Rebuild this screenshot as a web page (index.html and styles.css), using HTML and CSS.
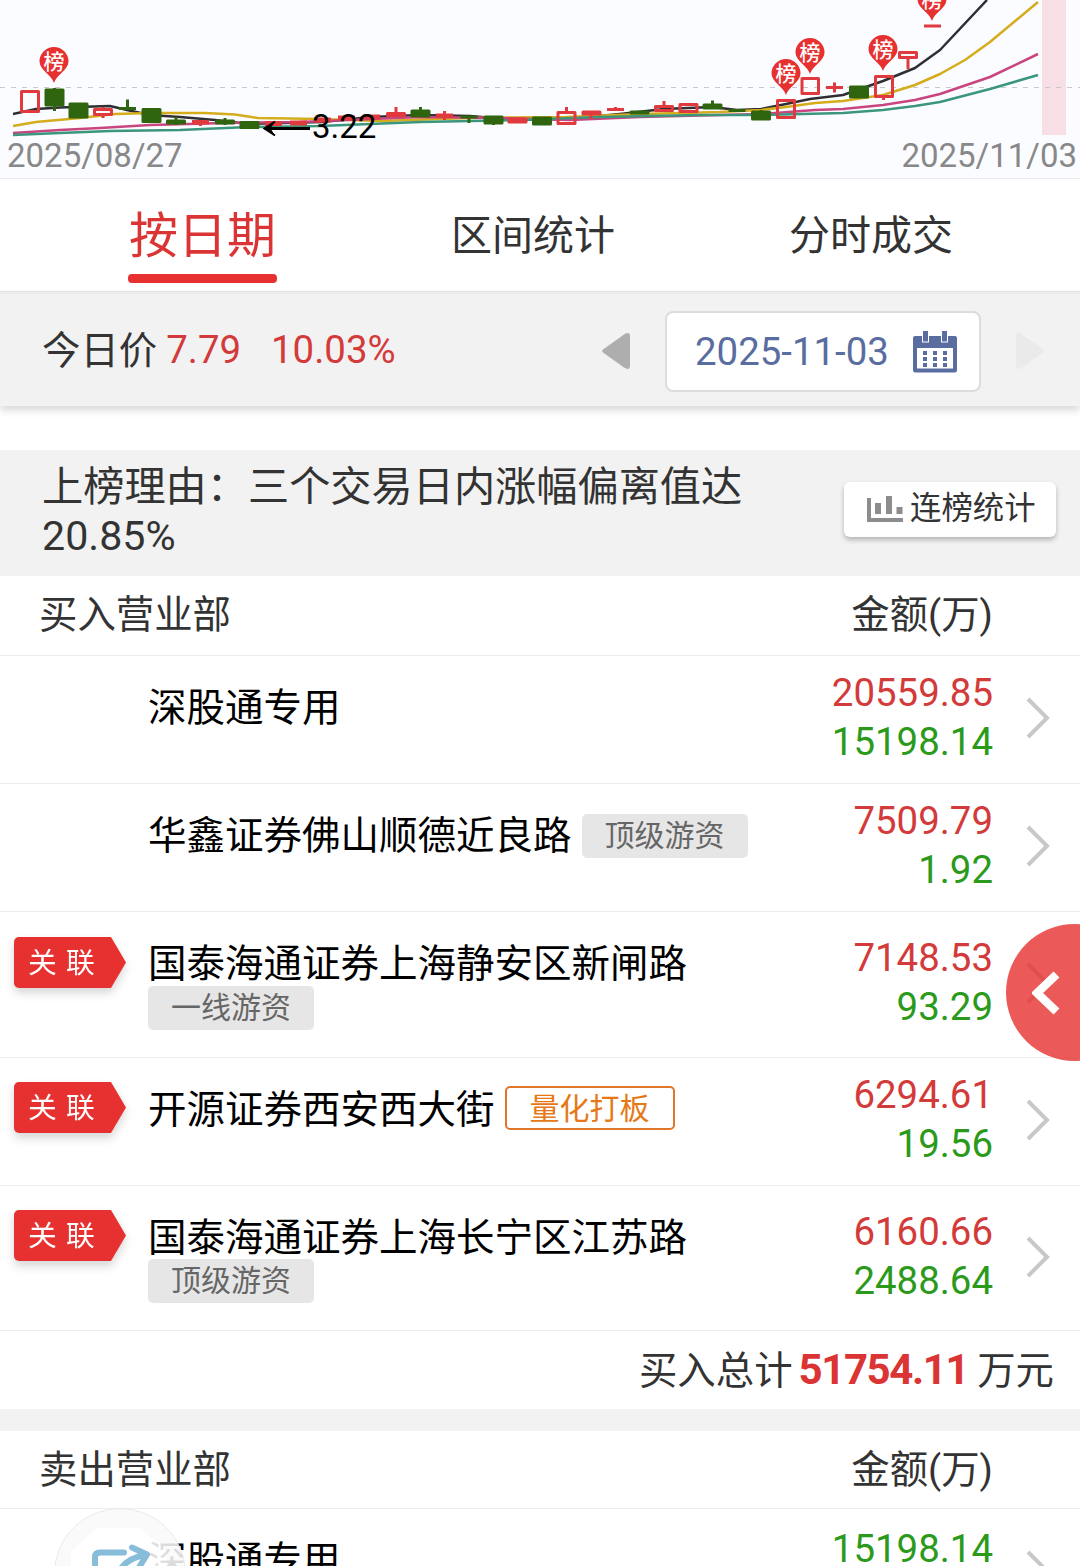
FILE: index.html
```html
<!DOCTYPE html>
<html lang="zh-CN">
<head>
    <meta charset="UTF-8">
    <meta name="viewport" content="width=device-width, initial-scale=1.0">
    <title>龙虎榜</title>
    <link rel="stylesheet" href="styles.css">
</head>
<body>
<div class="page">
    <!-- K线图 -->
    <div class="chart">
        <svg width="1080" height="178" viewBox="0 0 1080 178">
            <defs>
                <g id="pin">
                    <path d="M0 36C-2 28-14.500 23-14.500 14.500a14.500 14.500 0 1 1 29 0C14.500 23 2 28 0 36z" fill="#e73030"/>
                    <text x="0" y="21.500" class="pin-text">榜</text>
                </g>
            </defs>
            <rect x="1042" y="0" width="24" height="135" fill="#f7dfe5"/>
            <path class="grid" d="M0 87.500H1080"/>
            <g class="lines">
                <path stroke="#2f2f33" d="M13 114L36 109 60 107.500 110 106 127 110 150 115 180 117 215 120 249 124 322 122 371 117 420 115 470 116 517 120 566 119 620 114 664 109 712 107 737 110 761 109 786 104 810 99 843 95 883 81 915 68 940 50 987 0"/>
                <path stroke="#d4ac1c" d="M13 126L36 122 80 118 115 114 150 113 205 113 235 114.500 258 118 320 119 380 121 470 118 566 117 640 114 720 112 761 110 786 107 815 103 843 101 883 95 915 85 940 74 965 60 990 42 1038 2"/>
                <path stroke="#c9457f" d="M13 133L60 130 100 128 150 125 225 123 300 122 420 117 500 118 570 120 640 117 761 114 815 110 843 109 883 105 915 100 940 94 990 77 1038 54"/>
                <path stroke="#3c967c" d="M13 135L60 133 110 131 180 130 249 127 320 126 420 122 520 120 600 117 700 115 761 115 843 113 883 110 915 106 940 102 990 89 1038 75"/>
            </g>
            <g class="up">
                <path d="M21.500 91.500h17v20h-17zM94.500 109.500h17v5h-17zM103 107v3M103 115v3M192 121.500h17M192 123h17M200.500 122v4M265 122.500h17M265 124.500h17M290 122h17M290 124h17M314 119h17M314 121h17M338 117h17M338 119h17M363 116h17M363 118h17M387.500 113.500h17v2h-17zM396 107v6M436 115h17M436 116.500h17M444.500 111v9M509 119h17v3h-17zM558 112.500h17v11h-17zM566.500 107v5M583 112h17v2h-17zM591 114v5M607 109.500h17M615.500 107v3M655.500 106.500h17v4h-17zM664 101v5M680 104.500h17v7h-17zM777.500 100.500h17v17h-17zM802 78.500h16.500v15H802zM826 87.500h17M834.500 82.500v10M875.500 76.500h17v20h-17zM883.500 97v3M899.500 52.500h17v5h-17zM908 58v11M924 26h17"/>
            </g>
            <g class="down">
                <path d="M46 90h17v15H46zM54.500 88v23M70 104h17v13H70zM78.500 103v14M119 108.500h17M127.500 99.500v9M143 109.500h17v12h-17zM152 109v14M167.500 121h17v2h-17zM176 117v8M216.500 121h17v2h-17zM225 118v7M241 122.500h17v5h-17zM412 111h17v5h-17zM420.500 107v10M460.500 117h17M469 117v6M485 117h17v6h-17zM493.500 116v9M533.500 118h17v6h-17zM631 112h17v1h-17zM704 105h17v3h-17zM712.500 100.500v6M728.500 110.500h17M752.500 112h17v7h-17zM761 110v10M850.500 87h17v10h-17zM859 86v12"/>
            </g>
            <use href="#pin" x="54" y="47"/>
            <use href="#pin" x="786" y="59"/>
            <use href="#pin" x="810" y="38"/>
            <use href="#pin" x="883" y="35"/>
            <use href="#pin" x="932" y="-15"/>
            <path d="M270 128.500H310" stroke="#000" stroke-width="3"/>
            <path d="M263 128.500l12-7-4.500 7 4.500 7z" fill="#000"/>
            <path d="M275 121.500l-10.500 7 10.500 7" fill="none" stroke="#000" stroke-width="2"/>
            <text x="312" y="138" class="low-price">3.22</text>
        </svg>
        <div class="chart-dates">
            <span>2025/08/27</span>
            <span>2025/11/03</span>
        </div>
    </div>

    <!-- 切换标签 -->
    <div class="tabs">
        <div class="tab active">按日期</div>
        <div class="tab">区间统计</div>
        <div class="tab">分时成交</div>
    </div>

    <!-- 今日价格和日期选择 -->
    <div class="price-bar">
        <span class="price-label">今日价</span>
        <span class="price">7.79</span>
        <span class="price">10.03%</span>
        <svg class="prev" width="28" height="36" viewBox="0 0 28 36"><path d="M1 16.500L22 1.500Q28-2 28 3V33Q28 38 22 34.500L1 19.500Q-.5 18 1 16.500z" fill="#aeaeae"/></svg>
        <div class="date-box">
            <span>2025-11-03</span>
            <svg width="44" height="42" viewBox="0 0 44 42">
                <path fill="#596da0" fill-rule="evenodd" d="M2 5H42Q44 5 44 7V39Q44 41.500 41.500 41.500H2.500Q0 41.500 0 39V7Q0 5 2 5zM4 17V37.500H40V17z"/>
                <path d="M9 0h7v11.500H9zM28 0h7v11.500h-7z" fill="#fff"/>
                <path d="M10 0h5v10.500h-5zM29 0h5v10.500h-5zM10 20h4v4h-4zM20 20h4v4h-4zM30 20h4v4h-4zM10 26h4v4h-4zM20 26h4v4h-4zM30 26h4v4h-4zM10 32h4v4h-4zM20 32h4v4h-4zM30 32h4v4h-4z" fill="#596da0"/>
            </svg>
        </div>
        <svg class="next" width="28" height="36" viewBox="0 0 28 36"><path d="M27 16.500L6 1.500Q0-2 0 3V33Q0 38 6 34.500L27 19.500Q28.500 18 27 16.500z" fill="#eaeaea"/></svg>
    </div>

    <!-- 上榜理由 -->
    <div class="reason">
        <p>上榜理由：三个交易日内涨幅偏离值达20.85%</p>
        <div class="stat-btn">
            <svg width="36" height="26" viewBox="0 0 36 26"><path fill="#8c8c8c" d="M0 2h4v20h32v4H0zM8 7h6v11H8zM19 0h6v18h-6zM29.500 11h6v7h-6z"/></svg>
            <span>连榜统计</span>
        </div>
    </div>

    <!-- 买入 -->
    <div class="list-head">
        <span>买入营业部</span>
        <span>金额(万)</span>
    </div>
    <div class="row">
        <div class="mark"></div>
        <div class="dept"><span class="name">深股通专用</span></div>
        <div class="amount"><span class="buy">20559.85</span><span class="sell">15198.14</span></div>
        <svg class="arrow" viewBox="0 0 24 42"><path d="M2 2l19 19L2 40"/></svg>
    </div>
    <div class="row">
        <div class="mark"></div>
        <div class="dept"><span class="name">华鑫证券佛山顺德近良路</span><span class="tag">顶级游资</span></div>
        <div class="amount"><span class="buy">7509.79</span><span class="sell">1.92</span></div>
        <svg class="arrow" viewBox="0 0 24 42"><path d="M2 2l19 19L2 40"/></svg>
    </div>
    <div class="row tall">
        <div class="mark"><div class="link"><span>关 联</span></div></div>
        <div class="dept"><span class="name">国泰海通证券上海静安区新闸路</span><span class="tag">一线游资</span></div>
        <div class="amount"><span class="buy">7148.53</span><span class="sell">93.29</span></div>
        <svg class="arrow" viewBox="0 0 24 42"><path d="M2 2l19 19L2 40"/></svg>
    </div>
    <div class="row">
        <div class="mark"><div class="link"><span>关 联</span></div></div>
        <div class="dept"><span class="name">开源证券西安西大街</span><span class="tag quant">量化打板</span></div>
        <div class="amount"><span class="buy">6294.61</span><span class="sell">19.56</span></div>
        <svg class="arrow" viewBox="0 0 24 42"><path d="M2 2l19 19L2 40"/></svg>
    </div>
    <div class="row last">
        <div class="mark"><div class="link"><span>关 联</span></div></div>
        <div class="dept"><span class="name">国泰海通证券上海长宁区江苏路</span><span class="tag">顶级游资</span></div>
        <div class="amount"><span class="buy">6160.66</span><span class="sell">2488.64</span></div>
        <svg class="arrow" viewBox="0 0 24 42"><path d="M2 2l19 19L2 40"/></svg>
    </div>
    <div class="total">
        <span>买入总计</span>
        <b>51754.11</b>
        <span>万元</span>
    </div>

    <!-- 卖出 -->
    <div class="list-head sell-head">
        <span>卖出营业部</span>
        <span>金额(万)</span>
    </div>
    <div class="row sell-row">
        <div class="mark"></div>
        <div class="dept"><span class="name">深股通专用</span></div>
        <div class="amount"><span class="sell">15198.14</span></div>
        <svg class="arrow" viewBox="0 0 24 42"><path d="M2 2l19 19L2 40"/></svg>
    </div>

    <!-- 悬浮按钮 -->
    <div class="side-btn">
        <svg width="28" height="44" viewBox="0 0 28 44"><path d="M24.500 3.500L5 22l19.500 18.500" fill="none" stroke="#fff" stroke-width="8.500"/></svg>
    </div>
    <div class="share-btn">
        <svg width="132" height="132" viewBox="0 0 132 132">
            <path d="M42 19H86L112 42V92L86 114H42L16 92V42z" fill="#fff"/>
            <path d="M69 43.500H45Q40 43.500 40 48V85Q40 90 45 90H84Q89 90 89 85V76M60 72Q66 50 90 46M77 38.500L92 45.500 83 60" fill="none" stroke="#78b4d5" stroke-width="6" stroke-linecap="round" stroke-linejoin="round"/>
        </svg>
    </div>
</div>
</body>
</html>
```
FILE: styles.css
```css
* {
    box-sizing: border-box;
}
body {
    margin: 0;
    background-color: #fff;
    color: #333;
    font-family: Roboto, "Noto Sans CJK SC", sans-serif;
    font-size: 38.4px;
    font-weight: 400;
}
svg {
    display: block;
    flex-shrink: 0;
}
.page {
    position: relative;
    width: 1080px;
    height: 1566px;
    overflow: hidden;
}

/* K线图 */
.chart {
    position: relative;
    height: 179px;
    background-color: #fbfcff;
    border-bottom: 1px solid #e9e9ee;
}
.grid {
    stroke: #c8c8cc;
    stroke-dasharray: 5 6;
}
.lines path {
    fill: none;
    stroke-width: 2.5;
    stroke-linejoin: round;
}
.up path {
    fill: none;
    stroke: #e03a3e;
    stroke-width: 3;
    stroke-linejoin: round;
}
.down path {
    fill: #2f650f;
    stroke: #2f650f;
    stroke-width: 3;
    stroke-linejoin: round;
}
.pin-text {
    fill: #fff;
    font-size: 21px;
    font-weight: 500;
    text-anchor: middle;
}
.low-price {
    fill: #000;
    font-size: 33px;
}
.chart-dates {
    position: absolute;
    left: 7px;
    right: 3px;
    bottom: 2px;
    display: flex;
    justify-content: space-between;
    color: #888;
    font-size: 33px;
    line-height: 40px;
}

/* 标签 */
.tabs {
    display: flex;
    justify-content: space-between;
    height: 113px;
    padding: 0 127px 0 128px;
    border-bottom: 1px solid #e8e8e8;
}
.tab {
    font-size: 41px;
    line-height: 114px;
}
.tab.active {
    color: #da3434;
    font-size: 49px;
    line-height: 116px;
    padding: 0 1px;
}
.tab.active::after {
    content: "";
    display: block;
    height: 9px;
    margin: -21px -1px 0;
    background-color: #e73030;
    border-radius: 4px;
}

/* 价格栏 */
.price-bar {
    display: flex;
    align-items: center;
    height: 114px;
    margin-bottom: 44px;
    padding: 2px 36px 0 42px;
    background-color: #f2f2f2;
    border-top: 2px solid #ededed;
    box-shadow: 0 4px 8px rgba(0, 0, 0, 0.16);
}
.price-label {
    margin-top: -8px;
}
.price {
    margin-top: -3px;
    margin-left: 9px;
    color: #d33a3a;
}
.price + .price {
    margin-left: 30px;
}
.prev {
    margin-left: auto;
}
.date-box {
    display: flex;
    align-items: center;
    justify-content: space-between;
    width: 316px;
    height: 81px;
    margin: 0 35px;
    padding: 1px 22px 0 28px;
    background-color: #fff;
    border: 2px solid #dcdcdc;
    border-radius: 8px;
    color: #596da0;
}

/* 上榜理由 */
.reason {
    display: flex;
    align-items: center;
    justify-content: space-between;
    height: 126px;
    padding: 0 24px 0 42px;
    background-color: #f2f2f2;
}
.reason p {
    width: 720px;
    margin: -2px 0 0;
    font-size: 41.2px;
    line-height: 49px;
}
.stat-btn {
    display: flex;
    align-items: center;
    gap: 7px;
    width: 212px;
    height: 55px;
    margin-top: -7px;
    padding-left: 23px;
    background-color: #fff;
    border-radius: 6px;
    box-shadow: 0 3px 5px rgba(0, 0, 0, 0.25);
    font-size: 31.4px;
    line-height: 50px;
}
.stat-btn svg {
    margin-top: -2px;
}
.stat-btn span {
    margin-top: -2px;
}

/* 营业部列表 */
.list-head {
    display: flex;
    justify-content: space-between;
    height: 80px;
    padding: 0 87px 0 39px;
    border-bottom: 1px solid #ededed;
    line-height: 77px;
}
.sell-head {
    height: 100px;
    border-top: 22px solid #f2f2f2;
}
.row {
    display: flex;
    align-items: center;
    height: 128px;
    padding-right: 30px;
    border-bottom: 1px solid #ededed;
}
.row.tall {
    height: 146px;
}
.row.last {
    height: 145px;
}
.mark {
    align-self: flex-start;
    width: 148px;
    padding: 24px 0 0 14px;
}
.tall .mark {
    padding-top: 25px;
}
.link {
    filter: drop-shadow(0 5px 5px rgba(0, 0, 0, 0.16));
}
.link span {
    display: block;
    width: 112px;
    height: 51px;
    padding-left: 14px;
    background-color: #e73030;
    border-radius: 5px 0 0 5px;
    clip-path: polygon(0 0, 97px 0, 100% 50%, 97px 100%, 0 100%);
    color: #fff;
    font-size: 28.8px;
    line-height: 52px;
    word-spacing: 2px;
}
.dept {
    display: flex;
    flex-wrap: wrap;
    align-self: flex-start;
    column-gap: 10px;
    width: 652px;
    padding-top: 30px;
}
.name {
    height: 44px;
    color: #000;
    font-size: 38.5px;
    line-height: 44px;
}
.tag {
    width: 166px;
    height: 44px;
    background-color: #e6e6e6;
    border-radius: 5px;
    color: #666;
    font-size: 30px;
    line-height: 44px;
    text-align: center;
}
.last .tag {
    margin-top: -1px;
}
.tag.quant {
    width: 170px;
    margin-top: -2px;
    background-color: #fff;
    border: 2px solid #e0762a;
    color: #e67817;
    line-height: 42px;
}
.amount {
    display: flex;
    flex-direction: column;
    flex: 1;
    margin-top: -5px;
    text-align: right;
    line-height: 49px;
}
.buy {
    color: #d33a3a;
}
.sell {
    color: #2b9a1b;
}
.arrow {
    width: 24px;
    height: 42px;
    margin: -3px 0 0 33px;
}
.arrow path {
    fill: none;
    stroke: #c8c8c8;
    stroke-width: 4;
}
.sell-row .amount {
    align-self: flex-start;
    margin-top: 15px;
}
.total {
    display: flex;
    justify-content: flex-end;
    height: 78px;
    padding-right: 26px;
    line-height: 80px;
}
.total b {
    margin: 0 9px 0 6px;
    color: #da3434;
    font-size: 42px;
    letter-spacing: -1.4px;
    line-height: 77px;
}

/* 悬浮按钮 */
.side-btn {
    position: absolute;
    top: 924px;
    left: 1006px;
    display: flex;
    align-items: center;
    width: 137px;
    height: 137px;
    padding-left: 26px;
    background-color: rgba(231, 48, 48, 0.8);
    border-radius: 50%;
}
.share-btn {
    position: absolute;
    top: 1508px;
    left: 54px;
    width: 132px;
    height: 132px;
    background-color: #fafafa;
    border: 1px solid #e6e6e6;
    border-radius: 50%;
    opacity: 0.88;
}
```
